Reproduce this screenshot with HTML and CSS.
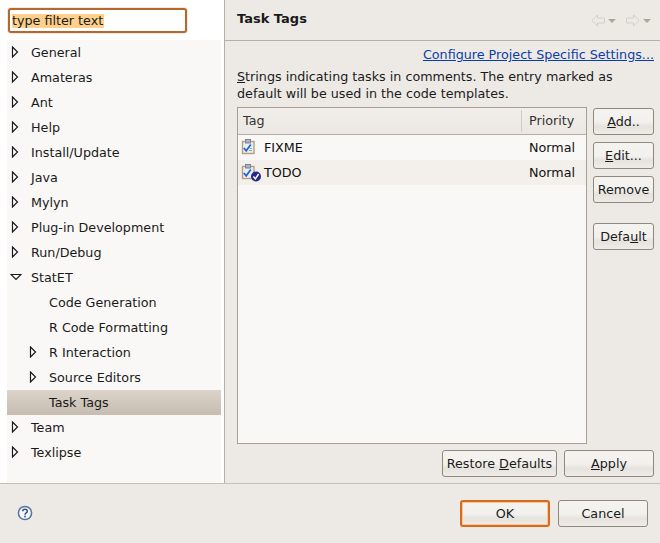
FILE: index.html
```html
<!DOCTYPE html>
<html>
  <head>
    <meta charset="utf-8">
    <title>Task Tags</title>
    <link rel="stylesheet" href="styles.css">
  </head>
  <body>
    <div class="main">
      <div class="side">
        <div class="filter-wrap">
          <div class="filter"><span class="filter-text">type filter text</span></div>
        </div>
        <ul class="tree">
          <li class="node"><svg class="twisty" viewBox="0 0 8 12"><path d="M1.5 1 L6.5 6 L1.5 11 Z"/></svg>General</li>
          <li class="node"><svg class="twisty" viewBox="0 0 8 12"><path d="M1.5 1 L6.5 6 L1.5 11 Z"/></svg>Amateras</li>
          <li class="node"><svg class="twisty" viewBox="0 0 8 12"><path d="M1.5 1 L6.5 6 L1.5 11 Z"/></svg>Ant</li>
          <li class="node"><svg class="twisty" viewBox="0 0 8 12"><path d="M1.5 1 L6.5 6 L1.5 11 Z"/></svg>Help</li>
          <li class="node"><svg class="twisty" viewBox="0 0 8 12"><path d="M1.5 1 L6.5 6 L1.5 11 Z"/></svg>Install/Update</li>
          <li class="node"><svg class="twisty" viewBox="0 0 8 12"><path d="M1.5 1 L6.5 6 L1.5 11 Z"/></svg>Java</li>
          <li class="node"><svg class="twisty" viewBox="0 0 8 12"><path d="M1.5 1 L6.5 6 L1.5 11 Z"/></svg>Mylyn</li>
          <li class="node"><svg class="twisty" viewBox="0 0 8 12"><path d="M1.5 1 L6.5 6 L1.5 11 Z"/></svg>Plug-in Development</li>
          <li class="node"><svg class="twisty" viewBox="0 0 8 12"><path d="M1.5 1 L6.5 6 L1.5 11 Z"/></svg>Run/Debug</li>
          <li class="node"><svg class="twisty open" viewBox="0 0 12 8"><path d="M1 1.5 L11 1.5 L6 6.5 Z"/></svg>StatET</li>
          <li class="node child">Code Generation</li>
          <li class="node child">R Code Formatting</li>
          <li class="node child"><svg class="twisty" viewBox="0 0 8 12"><path d="M1.5 1 L6.5 6 L1.5 11 Z"/></svg>R Interaction</li>
          <li class="node child"><svg class="twisty" viewBox="0 0 8 12"><path d="M1.5 1 L6.5 6 L1.5 11 Z"/></svg>Source Editors</li>
          <li class="node child selected">Task Tags</li>
          <li class="node"><svg class="twisty" viewBox="0 0 8 12"><path d="M1.5 1 L6.5 6 L1.5 11 Z"/></svg>Team</li>
          <li class="node"><svg class="twisty" viewBox="0 0 8 12"><path d="M1.5 1 L6.5 6 L1.5 11 Z"/></svg>Texlipse</li>
        </ul>
      </div>
      <div class="page">
        <div class="page-head">
          <h1>Task Tags</h1>
          <div class="nav">
            <svg class="nav-arrow" viewBox="0 0 14 12"><path d="M6.5 0.5 L0.8 6 L6.5 11.5 L6.5 8.5 L13.5 8.5 L13.5 3.5 L6.5 3.5 Z"/></svg>
            <span class="nav-drop"></span>
            <svg class="nav-arrow second" viewBox="0 0 14 12"><path d="M7.5 0.5 L13.2 6 L7.5 11.5 L7.5 8.5 L0.5 8.5 L0.5 3.5 L7.5 3.5 Z"/></svg>
            <span class="nav-drop"></span>
          </div>
        </div>
        <div class="page-body">
          <div class="link-row"><a class="link">Configure Project Specific Settings...</a></div>
          <p class="intro"><u>S</u>trings indicating tasks in comments. The entry marked as<br>default will be used in the code templates.</p>
          <div class="editor">
            <div class="table">
              <div class="table-head">
                <div class="col-tag">Tag</div>
                <div class="col-prio">Priority</div>
              </div>
              <div class="row">
                <svg class="task-icon" viewBox="0 0 20 20">
                  <rect x="1.5" y="3.5" width="11.5" height="12" fill="#e9eef5" stroke="#b89f78" stroke-width="1.4"/>
                  <rect x="4.5" y="1.5" width="5" height="3.5" fill="#aab4c6" stroke="#76839c"/>
                  <path d="M2.8 10 L5.2 12.8 L9.8 6.5" fill="none" stroke="#1f62d0" stroke-width="1.7"/>
                  <path d="M8 12.5 H11 M9 10.5 H11" stroke="#8fa3c4" stroke-width="1"/>
                </svg>
                <span class="tag-name">FIXME</span>
                <span class="tag-prio">Normal</span>
              </div>
              <div class="row alt">
                <svg class="task-icon" viewBox="0 0 20 20">
                  <rect x="1.5" y="3.5" width="11.5" height="12" fill="#e9eef5" stroke="#b89f78" stroke-width="1.4"/>
                  <rect x="4.5" y="1.5" width="5" height="3.5" fill="#aab4c6" stroke="#76839c"/>
                  <path d="M2.8 10 L5.2 12.8 L9.8 6.5" fill="none" stroke="#1f62d0" stroke-width="1.7"/>
                  <circle cx="15" cy="13.5" r="5" fill="#27278f"/>
                  <path d="M12.4 13.5 L14.4 15.8 L17.6 11" fill="none" stroke="#fff" stroke-width="1.5"/>
                </svg>
                <span class="tag-name">TODO</span>
                <span class="tag-prio">Normal</span>
              </div>
            </div>
            <div class="side-buttons">
              <button class="btn"><u>A</u>dd..</button>
              <button class="btn"><u>E</u>dit...</button>
              <button class="btn">Remove</button>
              <button class="btn default-btn">Defa<u>u</u>lt</button>
            </div>
          </div>
          <div class="page-buttons">
            <button class="btn restore">Restore <u>D</u>efaults</button>
            <button class="btn apply"><u>A</u>pply</button>
          </div>
        </div>
      </div>
    </div>
    <div class="footer">
      <svg class="help" viewBox="0 0 16 16">
        <circle cx="8" cy="8" r="6.6" fill="#f4f6fa" stroke="#54759f" stroke-width="1.5"/>
        <path d="M5.7 6.3 C5.7 3.4 10.3 3.4 10.3 6.3 C10.3 8 8 7.8 8 9.8" fill="none" stroke="#33507f" stroke-width="1.5"/>
        <rect x="7.2" y="10.7" width="1.6" height="1.6" fill="#33507f"/>
      </svg>
      <button class="btn ok">OK</button>
      <button class="btn cancel">Cancel</button>
    </div>
  </body>
</html>
```
FILE: styles.css
```css
html, body {
  margin: 0;
  padding: 0;
}

body {
  width: 660px;
  height: 543px;
  overflow: hidden;
  background-color: #edeae6;
  color: #1a1a1a;
  font-family: "DejaVu Sans", sans-serif;
  font-size: 12.73px;
}

.main {
  display: flex;
  height: 483px;
}

.side {
  width: 224px;
  background-color: #fff;
  border-right: 1px solid #b5afa6;
  box-sizing: content-box;
}

.filter-wrap {
  padding: 8px 0 0 8px;
  height: 33px;
  box-sizing: border-box;
}

.filter {
  width: 179px;
  height: 25px;
  box-sizing: border-box;
  border: 2px solid #b5672c;
  border-radius: 3px;
  background-color: #fff;
  box-shadow: 0 0 0 1px #eeebe7;
  padding: 4px 2px;
  line-height: 14px;
  white-space: nowrap;
}

.filter-text {
  display: inline-block;
  background-color: #fdd08c;
  height: 14px;
  padding-right: 1px;
}

.tree {
  list-style: none;
  margin: 7px 3px 0 7px;
  padding: 0;
  height: 443px;
  background-color: #f9f8f6;
}

.node {
  position: relative;
  height: 25px;
  line-height: 25px;
  padding-left: 24px;
}

.child {
  padding-left: 42px;
}

.selected {
  background: linear-gradient(#dcd4ca, #c6bcb0);
}

.twisty {
  position: absolute;
  left: 4px;
  top: 6px;
  width: 8px;
  height: 12px;
  fill: #fff;
  stroke: #1a1a1a;
  stroke-width: 1.2;
}

.twisty.open {
  left: 3px;
  top: 8px;
  width: 12px;
  height: 8px;
}

.child .twisty {
  left: 22px;
}

.page {
  flex: 1;
  display: flex;
  flex-direction: column;
}

.page-head {
  height: 41px;
  box-sizing: border-box;
  border-bottom: 1px solid #b5afa6;
  display: flex;
  justify-content: space-between;
  padding: 0 9px 0 12px;
}

h1 {
  margin: 0;
  font-size: 13px;
  font-weight: bold;
  line-height: 38px;
}

.nav {
  display: flex;
  align-items: center;
  height: 41px;
}

.nav-arrow {
  width: 14px;
  height: 13px;
  fill: none;
  stroke: #d2cfca;
  stroke-width: 1;
}

.nav-arrow.second {
  margin-left: 10px;
}

.nav-drop {
  width: 0;
  height: 0;
  margin-left: 3px;
  border-left: 4.5px solid transparent;
  border-right: 4.5px solid transparent;
  border-top: 4.5px solid #b0a698;
}

.page-body {
  padding: 0 6px 0 12px;
}

.link-row {
  text-align: right;
  height: 27px;
  line-height: 27px;
}

.link {
  color: #0b3da8;
  text-decoration: underline;
}

.intro {
  margin: 0;
  line-height: 17px;
  height: 39px;
}

.editor {
  display: flex;
}

.table {
  width: 350px;
  height: 337px;
  box-sizing: border-box;
  border: 1px solid #a89f92;
  background-color: #f9f8f6;
}

.table-head {
  display: flex;
  height: 27px;
  box-sizing: border-box;
  border-bottom: 1px solid #b5afa6;
  background: linear-gradient(#f2efeb, #ebe8e3);
  color: #333;
}

.col-tag {
  width: 284px;
  padding-left: 5px;
  box-sizing: border-box;
  border-right: 1px solid #d0cbc4;
  margin: 2px 0;
  line-height: 22px;
}

.col-prio {
  padding-left: 7px;
  margin: 2px 0;
  line-height: 22px;
}

.row {
  display: flex;
  align-items: center;
  height: 25px;
  color: #111;
}

.row.alt {
  background-color: #f3f0ec;
}

.task-icon {
  width: 20px;
  height: 20px;
  margin-left: 3px;
}

.tag-name {
  width: 265px;
  margin-left: 3px;
}

.side-buttons {
  display: flex;
  flex-direction: column;
  margin: 1px 0 0 6px;
  gap: 7px;
}

.btn {
  display: block;
  height: 27px;
  padding: 0;
  box-sizing: border-box;
  border: 1px solid #8f887d;
  border-radius: 3px;
  background: linear-gradient(#f5f3f0 0%, #f3f1ee 50%, #e6e3de 70%, #efece8 100%);
  color: #1a1a1a;
  font-family: "DejaVu Sans", sans-serif;
  font-size: 12.73px;
}

.side-buttons .btn {
  width: 61px;
}

.side-buttons .default-btn {
  margin-top: 13px;
}

.page-buttons {
  display: flex;
  justify-content: flex-end;
  gap: 7px;
  margin-top: 6px;
}

.restore {
  width: 115px;
}

.apply {
  width: 90px;
}

.footer {
  position: relative;
  display: flex;
  justify-content: flex-end;
  gap: 8px;
  height: 60px;
  box-sizing: border-box;
  border-top: 1px solid #c4bfb7;
  padding: 16px 12px 0 0;
}

.help {
  position: absolute;
  left: 17px;
  top: 21px;
  width: 16px;
  height: 16px;
}

.ok, .cancel {
  width: 90px;
}

.ok {
  border: 2px solid #d9691c;
  box-shadow: inset 0 0 0 1px #f8c79a;
}
```
